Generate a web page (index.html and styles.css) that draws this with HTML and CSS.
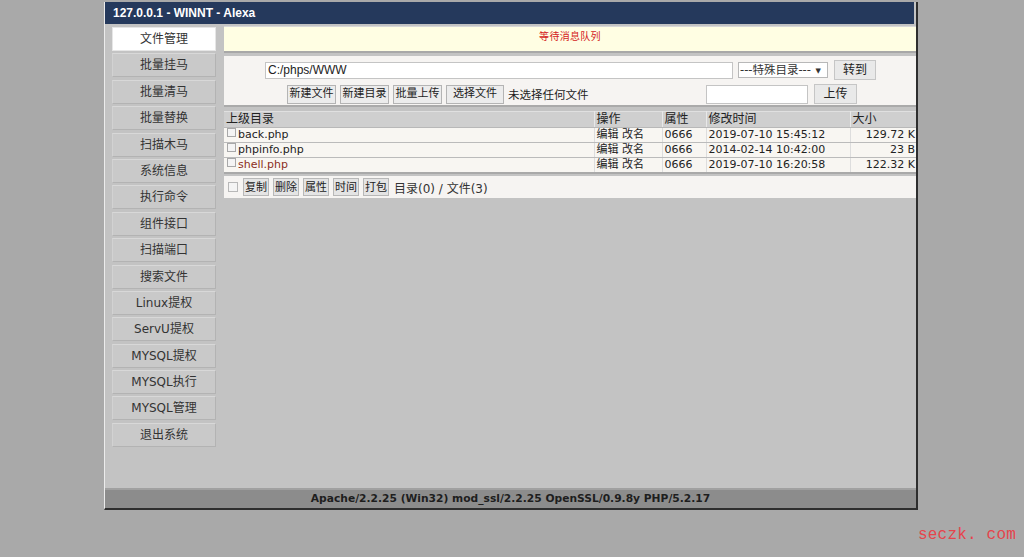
FILE: index.html
```html
<!DOCTYPE html>
<html>
<head>
<meta charset="utf-8">
<title>WINNT - Alexa</title>
<link rel="stylesheet" href="styles.css">
</head>
<body>
<div class="frame">
  <div class="titlebar">127.0.0.1 - WINNT - Alexa</div>
  <div class="main">
    <nav class="side">
      <div class="navbtn active">文件管理</div>
      <div class="navbtn">批量挂马</div>
      <div class="navbtn">批量清马</div>
      <div class="navbtn">批量替换</div>
      <div class="navbtn">扫描木马</div>
      <div class="navbtn">系统信息</div>
      <div class="navbtn">执行命令</div>
      <div class="navbtn">组件接口</div>
      <div class="navbtn">扫描端口</div>
      <div class="navbtn">搜索文件</div>
      <div class="navbtn">Linux提权</div>
      <div class="navbtn">ServU提权</div>
      <div class="navbtn">MYSQL提权</div>
      <div class="navbtn">MYSQL执行</div>
      <div class="navbtn">MYSQL管理</div>
      <div class="navbtn">退出系统</div>
    </nav>
    <div class="content">
      <div class="msg">等待消息队列</div>
      <div class="tools">
        <div class="row1">
          <input class="path" type="text" value="C:/phps/WWW">
          <div class="select">---特殊目录--- <span class="arrow">▼</span></div>
          <button class="btn go">转到</button>
        </div>
        <div class="row2">
          <button class="btn">新建文件</button>
          <button class="btn">新建目录</button>
          <button class="btn">批量上传</button>
          <button class="btn choose">选择文件</button>
          <span class="nofile">未选择任何文件</span>
          <input class="upname" type="text">
          <button class="btn up">上传</button>
        </div>
      </div>
      <table class="files">
        <colgroup>
          <col class="c-name"><col class="c-op"><col class="c-attr"><col class="c-time"><col class="c-size">
        </colgroup>
        <thead>
          <tr><th>上级目录</th><th>操作</th><th>属性</th><th>修改时间</th><th>大小</th></tr>
        </thead>
        <tbody>
          <tr><td><span class="cb"></span>back.php</td><td>编辑 改名</td><td>0666</td><td>2019-07-10 15:45:12</td><td class="num">129.72 K</td></tr>
          <tr><td><span class="cb"></span>phpinfo.php</td><td>编辑 改名</td><td>0666</td><td>2014-02-14 10:42:00</td><td class="num">23 B</td></tr>
          <tr><td class="red"><span class="cb"></span>shell.php</td><td>编辑 改名</td><td>0666</td><td>2019-07-10 16:20:58</td><td class="num">122.32 K</td></tr>
        </tbody>
      </table>
      <div class="actions">
        <span class="cb big"></span>
        <button class="btn sm">复制</button>
        <button class="btn sm">删除</button>
        <button class="btn sm">属性</button>
        <button class="btn sm">时间</button>
        <button class="btn sm">打包</button>
        <span class="count">目录(0) / 文件(3)</span>
      </div>
    </div>
  </div>
  <div class="footer">Apache/2.2.25 (Win32) mod_ssl/2.2.25 OpenSSL/0.9.8y PHP/5.2.17</div>
</div>
<div class="watermark">seczk. com</div>
</body>
</html>
```
FILE: styles.css
```css
html, body {
  margin: 0;
  padding: 0;
}
body {
  background: #a9a9a9;
  width: 1024px;
  height: 557px;
  overflow: hidden;
  position: relative;
  font-family: "DejaVu Sans", "Noto Sans CJK SC", sans-serif;
  font-size: 12px;
  color: #222;
}
.frame {
  margin: 2px 0 0 104px;
  width: 814px;
  height: 508px;
  box-sizing: border-box;
  background: #c3c3c3;
  border-left: 1px solid #ececec;
  border-right: 2px solid #2e2e2e;
  border-bottom: 2px solid #2e2e2e;
  display: flex;
  flex-direction: column;
}
.titlebar {
  height: 22px;
  line-height: 22px;
  background: #25395c;
  color: #fff;
  font-family: "Liberation Sans", "Noto Sans CJK SC", sans-serif;
  font-weight: bold;
  font-size: 12px;
  padding-left: 8px;
  margin-right: 2px;
}
.main {
  flex: 1;
  display: flex;
  min-height: 0;
}
.side {
  width: 104px;
  padding: 3px 0 0 7px;
  flex: none;
}
.navbtn {
  height: 24px;
  line-height: 22px;
  box-sizing: border-box;
  margin-bottom: 2.4px;
  background: #c9c9c9;
  border: 1px solid #b3b3b3;
  border-top-color: #d8d8d8;
  border-left-color: #d2d2d2;
  text-align: center;
  font-size: 12px;
  color: #333;
}
.navbtn.active {
  background: #fff;
  border-color: #e6e6e6;
}
.content {
  margin-left: 8px;
  flex: 1;
  min-width: 0;
  padding-top: 2px;
  display: flex;
  flex-direction: column;
}
.msg {
  height: 27px;
  box-sizing: border-box;
  background: #fffee3;
  border-top: 1px solid #d8d8d8;
  border-bottom: 2px solid #a8a8a8;
  color: #d42222;
  font-size: 10px;
  text-align: center;
  padding-top: 1px;
  letter-spacing: 0.3px;
}
.tools {
  margin-top: 3px;
  background: #f6f4f2;
  border-bottom: 2px solid #aaa;
  padding: 4px 0 1px 0;
}
.row1 {
  display: flex;
  align-items: center;
  padding-left: 41px;
  height: 20px;
}
.path {
  width: 468px;
  height: 17px;
  box-sizing: border-box;
  border: 1px solid #c4c4c4;
  background: #fff;
  font-family: "Liberation Sans", sans-serif;
  font-size: 12px;
  padding: 0 2px;
  margin: 0;
  color: #222;
}
.select {
  margin-left: 5px;
  width: 90px;
  height: 16px;
  line-height: 14px;
  box-sizing: border-box;
  border: 1px solid #b8b8b8;
  background: #fff;
  font-size: 11.5px;
  padding-left: 1px;
  color: #333;
  white-space: nowrap;
  overflow: hidden;
}
.select .arrow {
  font-size: 7px;
  vertical-align: 1px;
  margin-left: 1px;
}
.btn {
  font-family: "DejaVu Sans", "Noto Sans CJK SC", sans-serif;
  font-size: 11px;
  color: #222;
  background: #ececec;
  border: 1px solid #b4b4b4;
  border-radius: 0;
  margin: 0;
  padding: 0 1px;
  height: 19px;
  line-height: 16px;
  box-sizing: border-box;
  white-space: nowrap;
}
.btn.go {
  margin-left: 6px;
  width: 42px;
  height: 20px;
  font-size: 12px;
  background: #e9e9e9;
  border-color: #c6c6c6;
}
.row2 {
  display: flex;
  align-items: center;
  padding-left: 63px;
  padding-right: 59px;
  margin-top: 4px;
  height: 20px;
}
.row2 .btn {
  margin-right: 4px;
  width: 49px;
  padding: 0;
  font-size: 11px;
}
.row2 .btn.choose {
  width: 58px;
}
.nofile {
  font-size: 11.5px;
  color: #222;
}
.upname {
  margin: 0 0 0 auto;
  width: 102px;
  height: 19px;
  box-sizing: border-box;
  border: 1px solid #c4c4c4;
  background: #fff;
}
.row2 .btn.up {
  margin: 0 0 0 6px;
  width: 43px;
  height: 20px;
  font-size: 12px;
  background: #e9e9e9;
  border-color: #c6c6c6;
}
.files {
  margin-top: 4px;
  border-collapse: collapse;
  width: 692px;
  table-layout: fixed;
  font-size: 11px;
  border-top: 1px solid #e0e0e0;
  border-bottom: 2px solid #a9a9a9;
}
.c-name { width: 370px; }
.c-op { width: 68px; }
.c-attr { width: 44px; }
.c-time { width: 144px; }
.files th {
  background: #cfcfcf;
  font-weight: normal;
  font-size: 12px;
  text-align: left;
  height: 15px;
  line-height: 15px;
  padding: 0 0 0 2px;
  border-left: 1px solid #e8e8e8;
  border-bottom: 1px solid #b8b8b8;
  color: #222;
  overflow: hidden;
  white-space: nowrap;
}
.files th:first-child { border-left: 0; }
.files td {
  background: #f8f6f2;
  height: 14px;
  line-height: 14px;
  padding: 0 0 0 2px;
  border-left: 1px solid #ddd;
  border-bottom: 1px solid #bbb;
  white-space: nowrap;
  overflow: hidden;
  color: #222;
}
.files td:first-child { border-left: 0; }
.files td.num { text-align: right; padding-right: 1px; }
.files td.red { color: #8b2f23; }
.cb {
  display: inline-block;
  width: 9px;
  height: 9px;
  box-sizing: border-box;
  border: 1px solid #a8a8a8;
  background: #f4f4f4;
  margin: 0 2px 0 1px;
  vertical-align: 1px;
}
.actions {
  margin-top: 2px;
  height: 22px;
  background: #f6f4f2;
  display: flex;
  align-items: center;
  padding-left: 3px;
  font-size: 12px;
}
.cb.big {
  width: 10px;
  height: 10px;
  margin: 0 5px 0 1px;
  border-color: #b8b8b8;
}
.btn.sm {
  height: 18px;
  line-height: 15px;
  padding: 0 1px;
  margin-right: 4px;
  font-size: 11px;
  background: #e4e4e4;
  border-color: #b8b8b8;
}
.count {
  margin-left: 1px;
  color: #333;
}
.footer {
  height: 20px;
  line-height: 18px;
  background: #8c8c8c;
  border-top: 2px solid #a0a0a0;
  box-sizing: border-box;
  text-align: center;
  font-family: "DejaVu Sans", sans-serif;
  font-weight: bold;
  font-size: 10.7px;
  color: #1e1e1e;
}
.watermark {
  position: absolute;
  left: 918px;
  top: 526px;
  font-family: "Liberation Mono", monospace;
  font-size: 16px;
  color: #e5444c;
  letter-spacing: 0.2px;
}
```
